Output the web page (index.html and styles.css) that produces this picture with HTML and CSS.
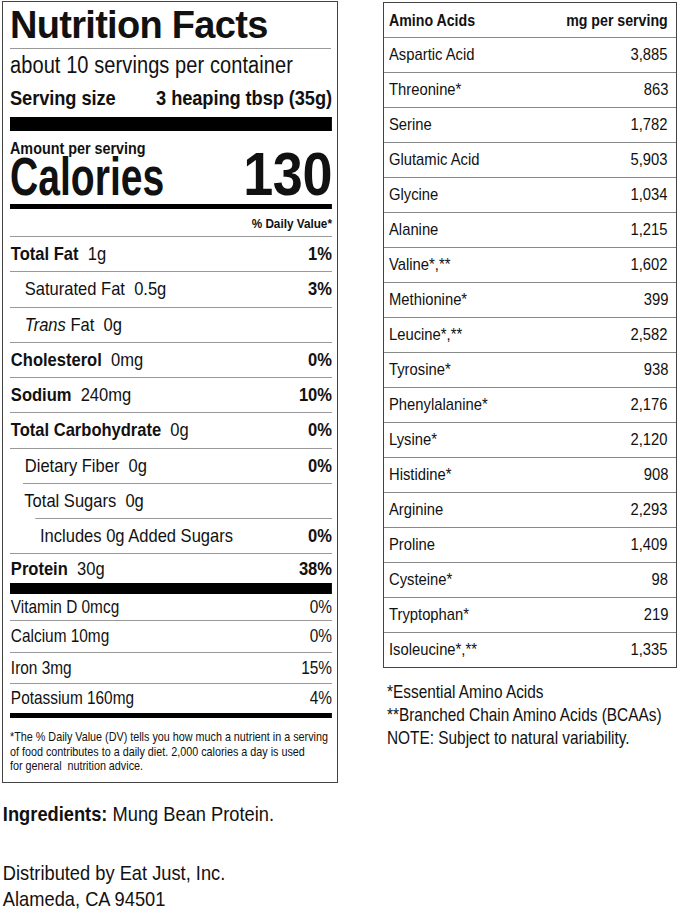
FILE: index.html
```html
<!DOCTYPE html>
<html lang="en">
<head>
<meta charset="utf-8">
<title>Nutrition Facts</title>
<link rel="stylesheet" href="styles.css">
</head>
<body>
<div class="page">
  <div class="left">
    <section class="label">
      <h1 class="title">Nutrition Facts</h1>
      <div class="cond">
        <div class="servings">about 10 servings per container</div>
        <div class="serving-size"><span>Serving size</span><span>3 heaping tbsp (35g)</span></div>
        <div class="bar bar-thick"></div>
        <div class="amount">Amount per serving</div>
        <div class="calories"><span class="cal-label">Calories</span><span class="cal-num">130</span></div>
        <div class="bar bar-med"></div>
        <div class="dv-head">% Daily Value*</div>
        <div class="row"><span><b>Total Fat</b>&nbsp; 1g</span><b>1%</b></div>
        <div class="row sub"><span>Saturated Fat&nbsp; 0.5g</span><b>3%</b></div>
        <div class="row sub"><span><i>Trans</i> Fat&nbsp; 0g</span></div>
        <div class="row"><span><b>Cholesterol</b>&nbsp; 0mg</span><b>0%</b></div>
        <div class="row"><span><b>Sodium</b>&nbsp; 240mg</span><b>10%</b></div>
        <div class="row"><span><b>Total Carbohydrate</b>&nbsp; 0g</span><b>0%</b></div>
        <div class="row sub"><span>Dietary Fiber&nbsp; 0g</span><b>0%</b></div>
        <div class="row sub-line"><span>Total Sugars&nbsp; 0g</span></div>
        <div class="row subsub"><span>Includes 0g Added Sugars</span><b>0%</b></div>
        <div class="row protein"><span><b>Protein</b>&nbsp; 30g</span><b>38%</b></div>
        <div class="bar bar-protein"></div>
        <div class="vit vit-first"><span>Vitamin D 0mcg</span><span>0%</span></div>
        <div class="vit"><span>Calcium 10mg</span><span>0%</span></div>
        <div class="vit"><span>Iron 3mg</span><span>15%</span></div>
        <div class="vit vit-last"><span>Potassium 160mg</span><span>4%</span></div>
        <div class="bar bar-med"></div>
        <p class="footnote">*The % Daily Value (DV) tells you how much a nutrient in a serving<br>of food contributes to a daily diet. 2,000 calories a day is used<br>for general&nbsp; nutrition advice.</p>
      </div>
    </section>
    <div class="left-text">
      <p class="ingredients"><b>Ingredients:</b> Mung Bean Protein.</p>
      <p class="dist">Distributed by Eat Just, Inc.<br>Alameda, CA 94501</p>
    </div>
  </div>
  <div class="right">
    <div class="amino">
      <div class="arow ahead"><span>Amino Acids</span><span>mg per serving</span></div>
      <div class="arow"><span>Aspartic Acid</span><span>3,885</span></div>
      <div class="arow"><span>Threonine*</span><span>863</span></div>
      <div class="arow"><span>Serine</span><span>1,782</span></div>
      <div class="arow"><span>Glutamic Acid</span><span>5,903</span></div>
      <div class="arow"><span>Glycine</span><span>1,034</span></div>
      <div class="arow"><span>Alanine</span><span>1,215</span></div>
      <div class="arow"><span>Valine*,**</span><span>1,602</span></div>
      <div class="arow"><span>Methionine*</span><span>399</span></div>
      <div class="arow"><span>Leucine*,**</span><span>2,582</span></div>
      <div class="arow"><span>Tyrosine*</span><span>938</span></div>
      <div class="arow"><span>Phenylalanine*</span><span>2,176</span></div>
      <div class="arow"><span>Lysine*</span><span>2,120</span></div>
      <div class="arow"><span>Histidine*</span><span>908</span></div>
      <div class="arow"><span>Arginine</span><span>2,293</span></div>
      <div class="arow"><span>Proline</span><span>1,409</span></div>
      <div class="arow"><span>Cysteine*</span><span>98</span></div>
      <div class="arow"><span>Tryptophan*</span><span>219</span></div>
      <div class="arow"><span>Isoleucine*,**</span><span>1,335</span></div>
    </div>
    <div class="notes">
      <div>*Essential Amino Acids</div>
      <div>**Branched Chain Amino Acids (BCAAs)</div>
      <div>NOTE: Subject to natural variability.</div>
    </div>
  </div>
</div>
</body>
</html>
```

FILE: styles.css
```css
* { box-sizing: border-box; }
html, body { margin: 0; padding: 0; background: #fff; }
body {
  font-family: "Liberation Sans", Arial, sans-serif;
  color: #111;
}
.page { display: flex; align-items: flex-start; width: 679px; overflow: hidden; }
.left { width: 338px; flex: none; padding-left: 2px; padding-top: 1px; }
.label {
  width: 336px;
  border: 1px solid #444;
  padding: 0 6px 0 7px;
  display: flex;
  flex-direction: column;
  overflow: hidden;
}
.title {
  margin: 0;
  height: 47px;
  border-bottom: 1px solid #999;
  font-weight: 700;
  font-size: 38px;
  letter-spacing: -0.7px;
  line-height: 46px;
}
/* condensed body of the label: Helvetica Condensed look */
.cond {
  width: 370.1px;
  flex: none;
  transform: scaleX(0.87);
  transform-origin: left top;
  display: flex;
  flex-direction: column;
}
.servings { height: 33px; line-height: 33px; font-size: 23px; letter-spacing: 0.1px; }
.serving-size {
  height: 35px; line-height: 32px;
  display: flex; justify-content: space-between;
  font-weight: 700; font-size: 21px; letter-spacing: -0.1px;
}
.bar { background: #000; }
.bar-thick { height: 14px; }
.bar-med { height: 5px; }
.bar-protein { height: 11px; }
.amount {
  height: 26px; padding-top: 8px; line-height: 18px;
  font-weight: 700; font-size: 16.5px;
}
.calories {
  height: 47px;
  display: flex; justify-content: space-between; align-items: flex-start;
  font-weight: 700;
}
.cal-label {
  font-size: 53.5px; line-height: 39px;
  transform: scaleX(0.84); transform-origin: left center;
}
.cal-num { font-size: 62px; line-height: 33px; letter-spacing: -0.5px; }
.dv-head {
  height: 27px; line-height: 30px; text-align: right;
  font-weight: 700; font-size: 13.5px;
}
.row {
  height: 35.25px;
  border-top: 1px solid #999;
  display: flex; justify-content: space-between; align-items: center;
  font-size: 19px;
  padding-left: 1px;
}
.row b { font-weight: 700; }
.row.sub { padding-left: 17px; }
.row.sub-line { margin-left: 15px; padding-left: 1.5px; }
.row.subsub { margin-left: 28.7px; padding-left: 5.8px; }
.row.protein { height: 30px; }
.vit {
  display: flex; justify-content: space-between; align-items: center;
  font-size: 17.7px; border-top: 1px solid #999; height: 31.5px;
  padding-left: 1px;
}
.vit-first { border-top: 0; height: 26px; }
.vit-last { height: 30px; }
.footnote {
  margin: 0;
  padding: 12px 0 8px;
  font-size: 12.4px;
  line-height: 14.6px;
  white-space: nowrap;
}
.left-text {
  width: 388px;
  transform: scaleX(0.87);
  transform-origin: left top;
}
.ingredients {
  margin: 19px 0 0 1px;
  font-size: 21px;
  line-height: 24px;
}
.ingredients b { font-weight: 700; }
.dist {
  margin: 34px 0 0 1px;
  font-size: 21px;
  line-height: 26px;
}
.right { width: 294px; flex: none; margin-left: 45px; padding-top: 2px; }
.amino {
  width: 294px;
  border: 1px solid #444;
}
.arow {
  height: 35px;
  border-top: 1px solid #888;
  display: flex; justify-content: space-between; align-items: center;
  padding: 0 8px 0 5px;
  font-size: 17px;
  white-space: nowrap;
}
.arow span { display: inline-block; transform: scaleX(0.87); }
.arow span:first-child { transform-origin: left center; }
.arow span:last-child { transform-origin: right center; }
.arow.ahead {
  border-top: 0; height: 34px;
  font-weight: 700; font-size: 16.3px;
}
.notes {
  width: 338px;
  transform: scaleX(0.87);
  transform-origin: left top;
  margin-top: 13px;
  padding-left: 4.6px;
  font-size: 17.7px;
  line-height: 23px;
  white-space: nowrap;
}
```
